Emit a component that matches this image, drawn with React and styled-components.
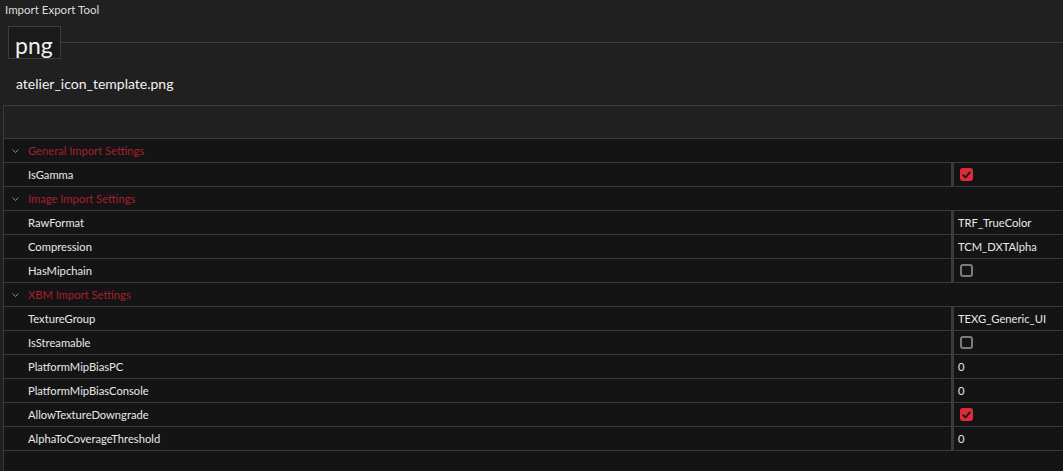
import React from "react";
import styled, { createGlobalStyle } from "styled-components";

const Global = createGlobalStyle`
  html, body { margin:0; padding:0; background:#202020; }
  body { font-family:Lato,"Open Sans",sans-serif; color:#e6e6e6; }
`;

const Window = styled.div`
  width:1063px;
  height:471px;
  display:flex;
  flex-direction:column;
  background:#202020;
  overflow:hidden;
`;

const Title = styled.div`
  height:25px;
  padding-left:5px;
  font-size:11.5px;
  line-height:20px;
  color:#dcdcdc;
`;

const TabStrip = styled.div`
  display:flex;
  align-items:center;
  padding-left:8px;
  height:34px;
`;

const Tab = styled.div`
  width:53px;
  height:33px;
  box-sizing:border-box;
  border:1px solid #3c3c3c;
  background:#1a1a1a;
  font-size:23px;
  line-height:36px;
  padding-left:6px;
  color:#f0f0f0;
`;

const TabLine = styled.div`
  flex:1;
  height:1px;
  background:#3e3e3e;
`;

const FileName = styled.div`
  height:46px;
  padding-left:16px;
  font-size:14px;
  line-height:50px;
  color:#f2f2f2;
`;

const Grid = styled.div`
  flex:1;
  margin-left:3px;
  border-left:1px solid #3a3a3a;
  border-top:1px solid #3a3a3a;
  display:flex;
  flex-direction:column;
  background:#141414;
`;

const HeaderBand = styled.div`
  height:32px;
  background:#202020;
  border-bottom:1px solid #3a3a3a;
`;

const Row = styled.div`
  height:23px;
  display:flex;
  align-items:stretch;
  border-bottom:1px solid #3a3a3a;
  font-size:11.2px;
`;

const GroupRow = styled(Row)`
  align-items:center;
  padding-left:8px;
  color:#a81f2e;
`;

const Chevron = styled.svg`
  width:7px;
  height:4px;
  margin-right:9px;
`;

const Label = styled.div`
  width:923px;
  padding-left:24px;
  display:flex;
  align-items:center;
  color:#e8e8e8;
  border-right:3px solid #3a3a3a;
`;

const Value = styled.div`
  flex:1;
  display:flex;
  align-items:center;
  padding-left:4px;
  color:#e8e8e8;
`;

const Box = styled.div`
  width:13px;
  height:13px;
  margin-left:2px;
  box-sizing:border-box;
  border-radius:3px;
  display:flex;
  align-items:center;
  justify-content:center;
  background:${p => (p.$on ? "#e02a3c" : "transparent")};
  border:${p => (p.$on ? "none" : "2px solid #7c7c7c")};
`;

const Check = ({ on }) => (
  <Box $on={on}>
    {on && (
      <svg width="9" height="8" viewBox="0 0 9 8">
        <path d="M1.2 4.2 L3.5 6.4 L7.8 1.4" fill="none" stroke="#141414" strokeWidth="1.9" strokeLinecap="round" strokeLinejoin="round" />
      </svg>
    )}
  </Box>
);

const groups = [
  {
    name: "General Import Settings",
    props: [["IsGamma", true]],
  },
  {
    name: "Image Import Settings",
    props: [
      ["RawFormat", "TRF_TrueColor"],
      ["Compression", "TCM_DXTAlpha"],
      ["HasMipchain", false],
    ],
  },
  {
    name: "XBM Import Settings",
    props: [
      ["TextureGroup", "TEXG_Generic_UI"],
      ["IsStreamable", false],
      ["PlatformMipBiasPC", "0"],
      ["PlatformMipBiasConsole", "0"],
      ["AllowTextureDowngrade", true],
      ["AlphaToCoverageThreshold", "0"],
    ],
  },
];

export default function App() {
  return (
    <Window>
      <Global />
      <Title>Import Export Tool</Title>
      <TabStrip>
        <Tab>png</Tab>
        <TabLine />
      </TabStrip>
      <FileName>atelier_icon_template.png</FileName>
      <Grid>
        <HeaderBand />
        {groups.map(g => (
          <React.Fragment key={g.name}>
            <GroupRow>
              <Chevron viewBox="0 0 7 4">
                <path d="M0.5 0.5 L3.5 3.5 L6.5 0.5" fill="none" stroke="#8a8a8a" strokeWidth="1" />
              </Chevron>
              {g.name}
            </GroupRow>
            {g.props.map(([k, v]) => (
              <Row key={k}>
                <Label>{k}</Label>
                <Value>{typeof v === "boolean" ? <Check on={v} /> : v}</Value>
              </Row>
            ))}
          </React.Fragment>
        ))}
      </Grid>
    </Window>
  );
}
